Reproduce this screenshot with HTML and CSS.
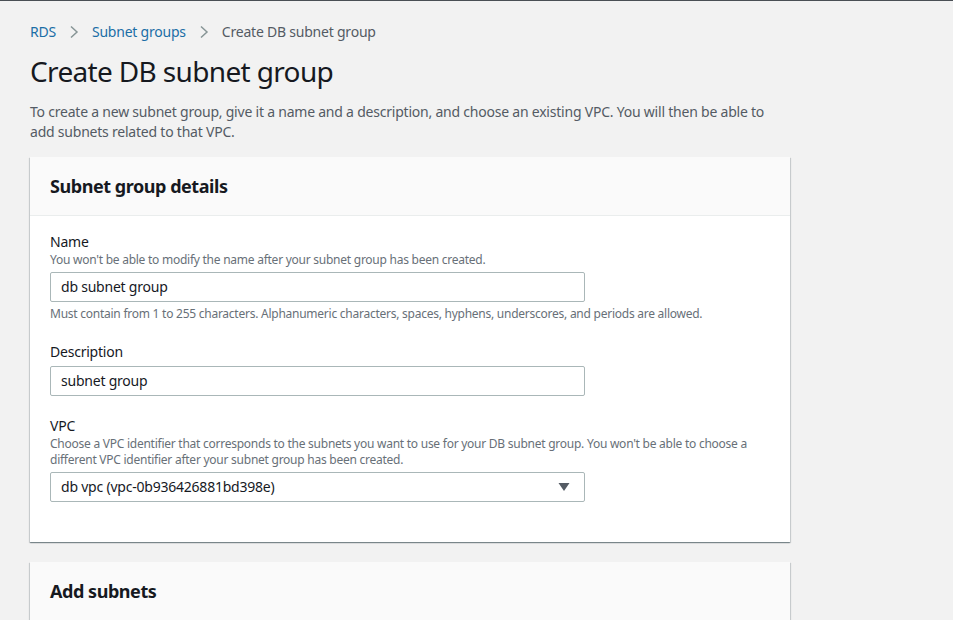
FILE: index.html
```html
<!DOCTYPE html>
<html lang="en">
<head>
<meta charset="utf-8">
<title>Create DB subnet group</title>
<link rel="stylesheet" href="styles.css">
</head>
<body>
<div class="page">
  <nav class="breadcrumbs">
    <a class="crumb-link" href="#">RDS</a>
    <svg class="chev" width="10" height="14" viewBox="0 0 10 14"><path d="M2 1.5 L8 7 L2 12.5" fill="none" stroke="#879596" stroke-width="1.5"/></svg>
    <a class="crumb-link" href="#">Subnet groups</a>
    <svg class="chev" width="10" height="14" viewBox="0 0 10 14"><path d="M2 1.5 L8 7 L2 12.5" fill="none" stroke="#879596" stroke-width="1.5"/></svg>
    <span class="crumb-current">Create DB subnet group</span>
  </nav>
  <h1 class="title">Create DB subnet group</h1>
  <p class="intro">To create a new subnet group, give it a name and a description, and choose an existing VPC. You will then be able to add subnets related to that VPC.</p>

  <section class="card">
    <header class="card-header"><h2>Subnet group details</h2></header>
    <div class="card-body">
      <div class="field">
        <div class="label">Name</div>
        <div class="hint">You won't be able to modify the name after your subnet group has been created.</div>
        <div class="input">db subnet group</div>
        <div class="hint after">Must contain from 1 to 255 characters. Alphanumeric characters, spaces, hyphens, underscores, and periods are allowed.</div>
      </div>
      <div class="field">
        <div class="label">Description</div>
        <div class="input">subnet group</div>
      </div>
      <div class="field">
        <div class="label">VPC</div>
        <div class="hint">Choose a VPC identifier that corresponds to the subnets you want to use for your DB subnet group. You won't be able to choose a different VPC identifier after your subnet group has been created.</div>
        <div class="input select"><span>db vpc (vpc-0b936426881bd398e)</span><svg class="caret" width="12" height="10" viewBox="0 0 12 10"><path d="M0.5 1 L11.5 1 L6 9 Z" fill="#545b64"/></svg></div>
      </div>
    </div>
  </section>

  <section class="card">
    <header class="card-header"><h2>Add subnets</h2></header>
    <div class="card-body tall"></div>
  </section>
</div>
</body>
</html>
```

FILE: styles.css
```css
html, body {
  margin: 0;
  padding: 0;
}
body {
  background: #f2f2f2;
  border-top: 1px solid #4a4f55;
  font-family: "Noto Sans", "Open Sans", sans-serif;
  color: #16191f;
  font-size: 14px;
  line-height: 20px;
  letter-spacing: -0.22px;
}
.page {
  padding: 21px 30px 0 30px;
  width: 760px;
}
.breadcrumbs {
  display: flex;
  align-items: center;
  gap: 13px;
  height: 20px;
}
.crumb-link {
  color: #1b6ea6;
  text-decoration: none;
}
.crumb-current {
  color: #545b64;
}
.chev {
  display: block;
}
.title {
  margin: 11px 0 0 0;
  font-size: 28px;
  line-height: 36px;
  font-weight: 400;
  letter-spacing: -0.65px;
  color: #16191f;
}
.intro {
  margin: 13px 0 0 0;
  color: #545b64;
  width: 760px;
}
.card {
  margin-top: 15px;
  background: #fff;
  box-shadow: 0 1px 1px 0 rgba(0, 28, 36, 0.35), 1px 1px 1px 0 rgba(0, 28, 36, 0.12), -1px 1px 1px 0 rgba(0, 28, 36, 0.12);
}
.card + .card {
  margin-top: 20px;
}
.card-header {
  background: #fafafa;
  border-bottom: 1px solid #eaeded;
  padding: 19px 20px;
}
.card-header h2 {
  margin: 0;
  font-size: 18px;
  line-height: 20px;
  font-weight: 700;
  letter-spacing: -0.45px;
  color: #16191f;
}
.card-body {
  padding: 16px 20px 40px 20px;
}
.card-body.tall {
  height: 200px;
}
.field + .field {
  margin-top: 20px;
}
.label {
  color: #16191f;
  line-height: 20px;
}
.hint {
  font-size: 12px;
  line-height: 16px;
  letter-spacing: -0.25px;
  color: #687078;
}
.hint.after {
  margin-top: 4px;
}
.input {
  margin-top: 4px;
  box-sizing: border-box;
  width: 535px;
  height: 30px;
  border: 1px solid #aab7b8;
  border-radius: 2px;
  padding: 4px 10px;
  line-height: 20px;
  color: #16191f;
  background: #fff;
}
.select {
  display: flex;
  align-items: center;
  justify-content: space-between;
  padding-right: 14px;
}
.caret {
  display: block;
}
```
